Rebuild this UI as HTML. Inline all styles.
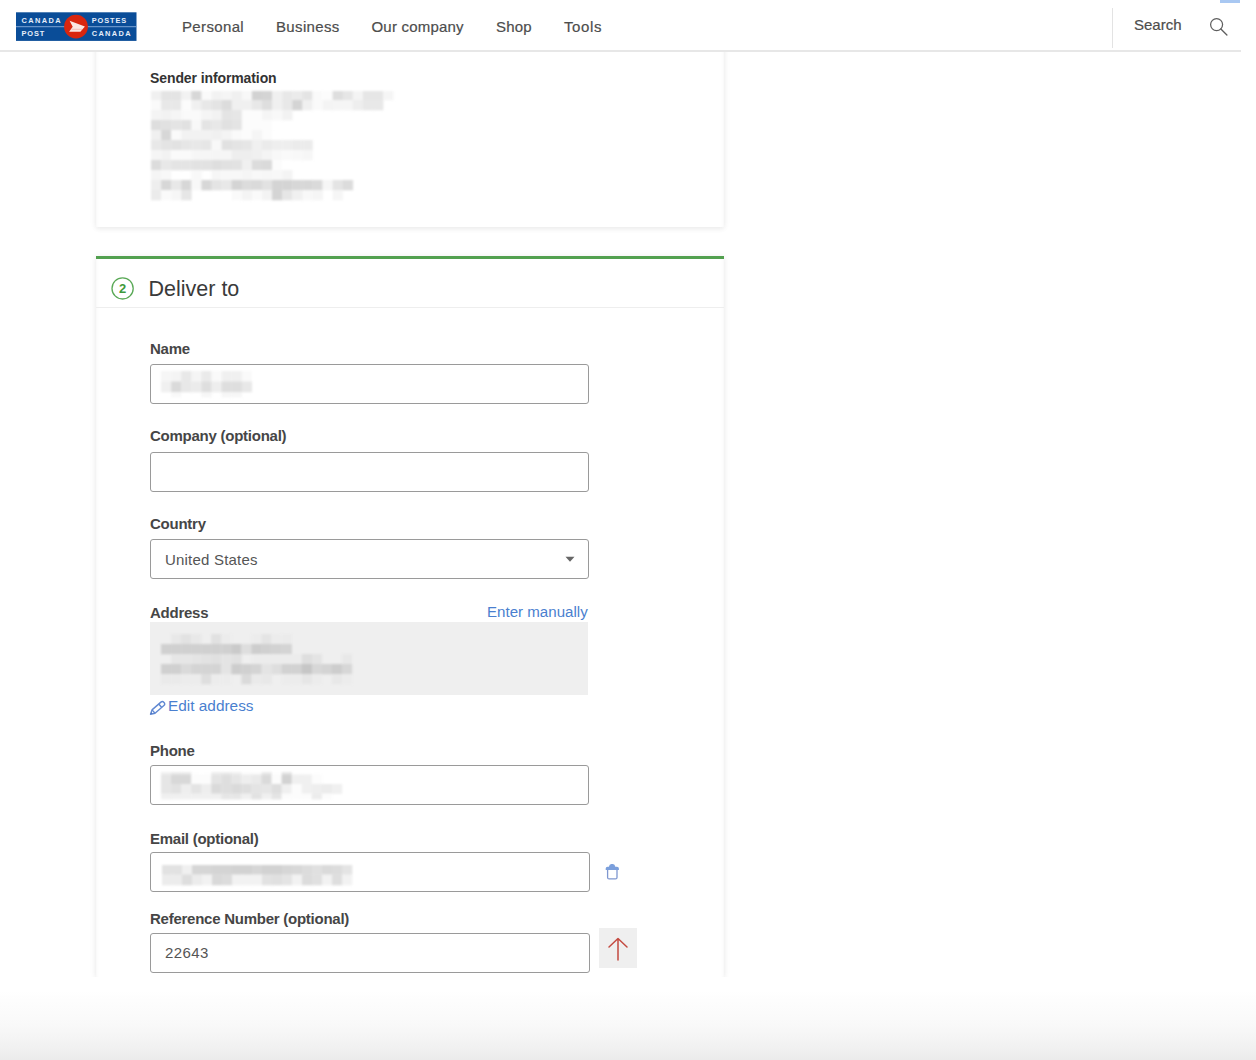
<!DOCTYPE html>
<html><head><meta charset="utf-8">
<style>
*{box-sizing:border-box;margin:0;padding:0}
html,body{width:1256px;height:1060px;overflow:hidden;background:#fff;font-family:"Liberation Sans",sans-serif}
.a{position:absolute}
.t{position:absolute;white-space:nowrap;line-height:1}
.nav{font-size:15px;color:#4d4d4d;letter-spacing:0.35px;-webkit-text-stroke:0.2px #4d4d4d}
.lbl{font-size:15px;font-weight:700;color:#464646;letter-spacing:-0.25px}
.inp{position:absolute;left:150px;width:439px;height:40px;border:1.3px solid #9a9a9a;border-radius:3px;background:#fff}
.blk{position:absolute;background:#d9d9d9}
.link{color:#4a7fcf;font-size:15.4px}
</style></head><body>

<!-- card 1 -->
<div class="a" style="left:96px;top:-20px;width:628px;height:247px;background:#fff;box-shadow:0 2px 5px rgba(0,0,0,0.06),0 0 8px rgba(0,0,0,0.05),inset 3px 0 3px -2px rgba(0,0,0,0.03),inset -3px 0 3px -2px rgba(0,0,0,0.03)"></div>
<!-- header -->
<div class="a" style="left:0;top:0;width:1241px;height:52px;border-bottom:2px solid #e7e7e7;background:#fff"></div>
<div class="a" style="left:1220px;top:0;width:20px;height:3px;background:#a9c8f2"></div>

<!-- logo -->
<svg class="a" style="left:16px;top:12px" width="121" height="30" viewBox="0 0 121 30">
  <rect x="0" y="0.3" width="120.5" height="28.6" fill="#0a4d98"/>
  <rect x="0" y="14.2" width="121" height="1" fill="#7ea5d5"/>
  <circle cx="60" cy="14.7" r="11.9" fill="#d9260f"/>
  <path d="M53.6 8.8 L68.9 14.4 L64.4 19.8 L53.1 19.8 L56.7 14.7 Z" fill="#fbe6e2"/>
  <path d="M55.5 17.3 L66 17.3" stroke="#f0b0a8" stroke-width="0.8"/>
  <g font-family="Liberation Sans" font-weight="700" font-size="7.4" fill="#e6eefa">
  <text x="5.6" y="10.7" textLength="38.9" lengthAdjust="spacing">CANADA</text>
  <text x="5.6" y="24.2" textLength="22.6" lengthAdjust="spacing">POST</text>
  <text x="75.7" y="10.7" textLength="34.6" lengthAdjust="spacing">POSTES</text>
  <text x="75.7" y="24.2" textLength="38.9" lengthAdjust="spacing">CANADA</text>
  </g>
</svg>

<div class="t nav" style="left:182px;top:19px">Personal</div>
<div class="t nav" style="left:276px;top:19px">Business</div>
<div class="t nav" style="left:371.5px;top:19px;letter-spacing:0.2px">Our company</div>
<div class="t nav" style="left:496px;top:19px;letter-spacing:0.2px">Shop</div>
<div class="t nav" style="left:564px;top:19px;letter-spacing:0.6px">Tools</div>

<div class="a" style="left:1111.5px;top:8px;width:1.5px;height:40px;background:#e3e3e3"></div>
<div class="t nav" style="left:1134px;top:17px;letter-spacing:0">Search</div>
<svg class="a" style="left:1205px;top:14px" width="28" height="26" viewBox="0 0 28 26">
  <circle cx="11.6" cy="10.6" r="6.0" fill="none" stroke="#5f5f5f" stroke-width="1.25"/>
  <line x1="15.9" y1="15" x2="21.9" y2="21" stroke="#5f5f5f" stroke-width="1.35" stroke-linecap="round"/>
</svg>

<div class="t lbl" style="left:150px;top:71px;letter-spacing:-0.1px;font-size:14px;color:#333">Sender information</div>

<!--B:sender--><svg class="a" style="left:151.2px;top:91px;overflow:visible;filter:blur(1.3px)" width="246" height="113"><g><rect x="0.00" y="0" width="10.39" height="9.3" fill="rgb(240,240,240)"/><rect x="10.09" y="0" width="10.39" height="9.3" fill="rgb(228,228,228)"/><rect x="20.18" y="0" width="10.39" height="9.3" fill="rgb(228,228,228)"/><rect x="30.27" y="0" width="10.39" height="9.3" fill="rgb(242,242,242)"/><rect x="40.36" y="0" width="10.39" height="9.3" fill="rgb(215,215,215)"/><rect x="50.45" y="0" width="10.39" height="9.3" fill="rgb(250,250,250)"/><rect x="60.54" y="0" width="10.39" height="9.3" fill="rgb(242,242,242)"/><rect x="70.63" y="0" width="10.39" height="9.3" fill="rgb(245,245,245)"/><rect x="80.72" y="0" width="10.39" height="9.3" fill="rgb(240,240,240)"/><rect x="90.81" y="0" width="10.39" height="9.3" fill="rgb(248,248,248)"/><rect x="100.90" y="0" width="10.39" height="9.3" fill="rgb(210,210,210)"/><rect x="110.99" y="0" width="10.39" height="9.3" fill="rgb(212,212,212)"/><rect x="121.08" y="0" width="10.39" height="9.3" fill="rgb(240,240,240)"/><rect x="131.17" y="0" width="10.39" height="9.3" fill="rgb(232,232,232)"/><rect x="141.26" y="0" width="10.39" height="9.3" fill="rgb(235,235,235)"/><rect x="151.35" y="0" width="10.39" height="9.3" fill="rgb(228,228,228)"/><rect x="161.44" y="0" width="10.39" height="9.3" fill="rgb(250,250,250)"/><rect x="171.53" y="0" width="10.39" height="9.3" fill="rgb(252,252,252)"/><rect x="181.62" y="0" width="10.39" height="9.3" fill="rgb(222,222,222)"/><rect x="191.71" y="0" width="10.39" height="9.3" fill="rgb(230,230,230)"/><rect x="201.80" y="0" width="10.39" height="9.3" fill="rgb(244,244,244)"/><rect x="211.89" y="0" width="10.39" height="9.3" fill="rgb(230,230,230)"/><rect x="221.98" y="0" width="10.39" height="9.3" fill="rgb(230,230,230)"/><rect x="232.07" y="0" width="10.39" height="9.3" fill="rgb(245,245,245)"/><rect x="0.00" y="9" width="10.39" height="10.3" fill="rgb(250,250,250)"/><rect x="10.09" y="9" width="10.39" height="10.3" fill="rgb(232,232,232)"/><rect x="20.18" y="9" width="10.39" height="10.3" fill="rgb(232,232,232)"/><rect x="30.27" y="9" width="10.39" height="10.3" fill="rgb(252,252,252)"/><rect x="40.36" y="9" width="10.39" height="10.3" fill="rgb(240,240,240)"/><rect x="50.45" y="9" width="10.39" height="10.3" fill="rgb(232,232,232)"/><rect x="60.54" y="9" width="10.39" height="10.3" fill="rgb(228,228,228)"/><rect x="70.63" y="9" width="10.39" height="10.3" fill="rgb(220,220,220)"/><rect x="80.72" y="9" width="10.39" height="10.3" fill="rgb(240,240,240)"/><rect x="90.81" y="9" width="10.39" height="10.3" fill="rgb(240,240,240)"/><rect x="100.90" y="9" width="10.39" height="10.3" fill="rgb(232,232,232)"/><rect x="110.99" y="9" width="10.39" height="10.3" fill="rgb(222,222,222)"/><rect x="121.08" y="9" width="10.39" height="10.3" fill="rgb(240,240,240)"/><rect x="131.17" y="9" width="10.39" height="10.3" fill="rgb(232,232,232)"/><rect x="141.26" y="9" width="10.39" height="10.3" fill="rgb(212,212,212)"/><rect x="151.35" y="9" width="10.39" height="10.3" fill="rgb(240,240,240)"/><rect x="161.44" y="9" width="10.39" height="10.3" fill="rgb(250,250,250)"/><rect x="171.53" y="9" width="10.39" height="10.3" fill="rgb(244,244,244)"/><rect x="181.62" y="9" width="10.39" height="10.3" fill="rgb(245,245,245)"/><rect x="191.71" y="9" width="10.39" height="10.3" fill="rgb(245,245,245)"/><rect x="201.80" y="9" width="10.39" height="10.3" fill="rgb(238,238,238)"/><rect x="211.89" y="9" width="10.39" height="10.3" fill="rgb(232,232,232)"/><rect x="221.98" y="9" width="10.39" height="10.3" fill="rgb(232,232,232)"/><rect x="0.00" y="19" width="10.39" height="10.3" fill="rgb(244,244,244)"/><rect x="10.09" y="19" width="10.39" height="10.3" fill="rgb(242,242,242)"/><rect x="20.18" y="19" width="10.39" height="10.3" fill="rgb(245,245,245)"/><rect x="30.27" y="19" width="10.39" height="10.3" fill="rgb(250,250,250)"/><rect x="40.36" y="19" width="10.39" height="10.3" fill="rgb(250,250,250)"/><rect x="50.45" y="19" width="10.39" height="10.3" fill="rgb(245,245,245)"/><rect x="60.54" y="19" width="10.39" height="10.3" fill="rgb(242,242,242)"/><rect x="70.63" y="19" width="10.39" height="10.3" fill="rgb(228,228,228)"/><rect x="80.72" y="19" width="10.39" height="10.3" fill="rgb(230,230,230)"/><rect x="90.81" y="19" width="10.39" height="10.3" fill="rgb(252,252,252)"/><rect x="100.90" y="19" width="10.39" height="10.3" fill="rgb(252,252,252)"/><rect x="110.99" y="19" width="10.39" height="10.3" fill="rgb(245,245,245)"/><rect x="121.08" y="19" width="10.39" height="10.3" fill="rgb(248,248,248)"/><rect x="131.17" y="19" width="10.39" height="10.3" fill="rgb(242,242,242)"/><rect x="0.00" y="29" width="10.39" height="10.3" fill="rgb(222,222,222)"/><rect x="10.09" y="29" width="10.39" height="10.3" fill="rgb(225,225,225)"/><rect x="20.18" y="29" width="10.39" height="10.3" fill="rgb(228,228,228)"/><rect x="30.27" y="29" width="10.39" height="10.3" fill="rgb(225,225,225)"/><rect x="40.36" y="29" width="10.39" height="10.3" fill="rgb(248,248,248)"/><rect x="50.45" y="29" width="10.39" height="10.3" fill="rgb(228,228,228)"/><rect x="60.54" y="29" width="10.39" height="10.3" fill="rgb(232,232,232)"/><rect x="70.63" y="29" width="10.39" height="10.3" fill="rgb(225,225,225)"/><rect x="80.72" y="29" width="10.39" height="10.3" fill="rgb(228,228,228)"/><rect x="90.81" y="29" width="10.39" height="10.3" fill="rgb(252,252,252)"/><rect x="100.90" y="29" width="10.39" height="10.3" fill="rgb(252,252,252)"/><rect x="110.99" y="29" width="10.39" height="10.3" fill="rgb(252,252,252)"/><rect x="0.00" y="39" width="10.39" height="10.3" fill="rgb(240,240,240)"/><rect x="10.09" y="39" width="10.39" height="10.3" fill="rgb(215,215,215)"/><rect x="20.18" y="39" width="10.39" height="10.3" fill="rgb(250,250,250)"/><rect x="30.27" y="39" width="10.39" height="10.3" fill="rgb(242,242,242)"/><rect x="40.36" y="39" width="10.39" height="10.3" fill="rgb(242,242,242)"/><rect x="50.45" y="39" width="10.39" height="10.3" fill="rgb(242,242,242)"/><rect x="60.54" y="39" width="10.39" height="10.3" fill="rgb(240,240,240)"/><rect x="70.63" y="39" width="10.39" height="10.3" fill="rgb(244,244,244)"/><rect x="80.72" y="39" width="10.39" height="10.3" fill="rgb(250,250,250)"/><rect x="90.81" y="39" width="10.39" height="10.3" fill="rgb(252,252,252)"/><rect x="100.90" y="39" width="10.39" height="10.3" fill="rgb(245,245,245)"/><rect x="110.99" y="39" width="10.39" height="10.3" fill="rgb(252,252,252)"/><rect x="0.00" y="49" width="10.39" height="10.3" fill="rgb(232,232,232)"/><rect x="10.09" y="49" width="10.39" height="10.3" fill="rgb(228,228,228)"/><rect x="20.18" y="49" width="10.39" height="10.3" fill="rgb(226,226,226)"/><rect x="30.27" y="49" width="10.39" height="10.3" fill="rgb(230,230,230)"/><rect x="40.36" y="49" width="10.39" height="10.3" fill="rgb(232,232,232)"/><rect x="50.45" y="49" width="10.39" height="10.3" fill="rgb(230,230,230)"/><rect x="60.54" y="49" width="10.39" height="10.3" fill="rgb(248,248,248)"/><rect x="70.63" y="49" width="10.39" height="10.3" fill="rgb(225,225,225)"/><rect x="80.72" y="49" width="10.39" height="10.3" fill="rgb(228,228,228)"/><rect x="90.81" y="49" width="10.39" height="10.3" fill="rgb(230,230,230)"/><rect x="100.90" y="49" width="10.39" height="10.3" fill="rgb(240,240,240)"/><rect x="110.99" y="49" width="10.39" height="10.3" fill="rgb(235,235,235)"/><rect x="121.08" y="49" width="10.39" height="10.3" fill="rgb(238,238,238)"/><rect x="131.17" y="49" width="10.39" height="10.3" fill="rgb(238,238,238)"/><rect x="141.26" y="49" width="10.39" height="10.3" fill="rgb(235,235,235)"/><rect x="151.35" y="49" width="10.39" height="10.3" fill="rgb(235,235,235)"/><rect x="0.00" y="59" width="10.39" height="10.3" fill="rgb(245,245,245)"/><rect x="10.09" y="59" width="10.39" height="10.3" fill="rgb(242,242,242)"/><rect x="20.18" y="59" width="10.39" height="10.3" fill="rgb(250,250,250)"/><rect x="30.27" y="59" width="10.39" height="10.3" fill="rgb(250,250,250)"/><rect x="40.36" y="59" width="10.39" height="10.3" fill="rgb(246,246,246)"/><rect x="50.45" y="59" width="10.39" height="10.3" fill="rgb(246,246,246)"/><rect x="60.54" y="59" width="10.39" height="10.3" fill="rgb(245,245,245)"/><rect x="70.63" y="59" width="10.39" height="10.3" fill="rgb(246,246,246)"/><rect x="80.72" y="59" width="10.39" height="10.3" fill="rgb(238,238,238)"/><rect x="90.81" y="59" width="10.39" height="10.3" fill="rgb(238,238,238)"/><rect x="100.90" y="59" width="10.39" height="10.3" fill="rgb(240,240,240)"/><rect x="110.99" y="59" width="10.39" height="10.3" fill="rgb(244,244,244)"/><rect x="121.08" y="59" width="10.39" height="10.3" fill="rgb(248,248,248)"/><rect x="131.17" y="59" width="10.39" height="10.3" fill="rgb(250,250,250)"/><rect x="141.26" y="59" width="10.39" height="10.3" fill="rgb(248,248,248)"/><rect x="151.35" y="59" width="10.39" height="10.3" fill="rgb(246,246,246)"/><rect x="0.00" y="69" width="10.39" height="10.3" fill="rgb(220,220,220)"/><rect x="10.09" y="69" width="10.39" height="10.3" fill="rgb(232,232,232)"/><rect x="20.18" y="69" width="10.39" height="10.3" fill="rgb(228,228,228)"/><rect x="30.27" y="69" width="10.39" height="10.3" fill="rgb(228,228,228)"/><rect x="40.36" y="69" width="10.39" height="10.3" fill="rgb(226,226,226)"/><rect x="50.45" y="69" width="10.39" height="10.3" fill="rgb(226,226,226)"/><rect x="60.54" y="69" width="10.39" height="10.3" fill="rgb(222,222,222)"/><rect x="70.63" y="69" width="10.39" height="10.3" fill="rgb(225,225,225)"/><rect x="80.72" y="69" width="10.39" height="10.3" fill="rgb(226,226,226)"/><rect x="90.81" y="69" width="10.39" height="10.3" fill="rgb(240,240,240)"/><rect x="100.90" y="69" width="10.39" height="10.3" fill="rgb(220,220,220)"/><rect x="110.99" y="69" width="10.39" height="10.3" fill="rgb(218,218,218)"/><rect x="121.08" y="69" width="10.39" height="10.3" fill="rgb(252,252,252)"/><rect x="0.00" y="79" width="10.39" height="10.3" fill="rgb(245,245,245)"/><rect x="10.09" y="79" width="10.39" height="10.3" fill="rgb(248,248,248)"/><rect x="40.36" y="79" width="10.39" height="10.3" fill="rgb(248,248,248)"/><rect x="60.54" y="79" width="10.39" height="10.3" fill="rgb(246,246,246)"/><rect x="70.63" y="79" width="10.39" height="10.3" fill="rgb(248,248,248)"/><rect x="80.72" y="79" width="10.39" height="10.3" fill="rgb(248,248,248)"/><rect x="90.81" y="79" width="10.39" height="10.3" fill="rgb(245,245,245)"/><rect x="100.90" y="79" width="10.39" height="10.3" fill="rgb(248,248,248)"/><rect x="110.99" y="79" width="10.39" height="10.3" fill="rgb(247,247,247)"/><rect x="121.08" y="79" width="10.39" height="10.3" fill="rgb(248,248,248)"/><rect x="131.17" y="79" width="10.39" height="10.3" fill="rgb(244,244,244)"/><rect x="0.00" y="89" width="10.39" height="10.3" fill="rgb(238,238,238)"/><rect x="10.09" y="89" width="10.39" height="10.3" fill="rgb(215,215,215)"/><rect x="20.18" y="89" width="10.39" height="10.3" fill="rgb(232,232,232)"/><rect x="30.27" y="89" width="10.39" height="10.3" fill="rgb(215,215,215)"/><rect x="40.36" y="89" width="10.39" height="10.3" fill="rgb(248,248,248)"/><rect x="50.45" y="89" width="10.39" height="10.3" fill="rgb(215,215,215)"/><rect x="60.54" y="89" width="10.39" height="10.3" fill="rgb(228,228,228)"/><rect x="70.63" y="89" width="10.39" height="10.3" fill="rgb(232,232,232)"/><rect x="80.72" y="89" width="10.39" height="10.3" fill="rgb(212,212,212)"/><rect x="90.81" y="89" width="10.39" height="10.3" fill="rgb(220,220,220)"/><rect x="100.90" y="89" width="10.39" height="10.3" fill="rgb(218,218,218)"/><rect x="110.99" y="89" width="10.39" height="10.3" fill="rgb(226,226,226)"/><rect x="121.08" y="89" width="10.39" height="10.3" fill="rgb(212,212,212)"/><rect x="131.17" y="89" width="10.39" height="10.3" fill="rgb(212,212,212)"/><rect x="141.26" y="89" width="10.39" height="10.3" fill="rgb(215,215,215)"/><rect x="151.35" y="89" width="10.39" height="10.3" fill="rgb(215,215,215)"/><rect x="161.44" y="89" width="10.39" height="10.3" fill="rgb(218,218,218)"/><rect x="171.53" y="89" width="10.39" height="10.3" fill="rgb(246,246,246)"/><rect x="181.62" y="89" width="10.39" height="10.3" fill="rgb(228,228,228)"/><rect x="191.71" y="89" width="10.39" height="10.3" fill="rgb(220,220,220)"/><rect x="0.00" y="99" width="10.39" height="10.3" fill="rgb(235,235,235)"/><rect x="10.09" y="99" width="10.39" height="10.3" fill="rgb(250,250,250)"/><rect x="20.18" y="99" width="10.39" height="10.3" fill="rgb(246,246,246)"/><rect x="30.27" y="99" width="10.39" height="10.3" fill="rgb(230,230,230)"/><rect x="80.72" y="99" width="10.39" height="10.3" fill="rgb(250,250,250)"/><rect x="90.81" y="99" width="10.39" height="10.3" fill="rgb(244,244,244)"/><rect x="100.90" y="99" width="10.39" height="10.3" fill="rgb(250,250,250)"/><rect x="110.99" y="99" width="10.39" height="10.3" fill="rgb(243,243,243)"/><rect x="121.08" y="99" width="10.39" height="10.3" fill="rgb(212,212,212)"/><rect x="131.17" y="99" width="10.39" height="10.3" fill="rgb(230,230,230)"/><rect x="141.26" y="99" width="10.39" height="10.3" fill="rgb(240,240,240)"/><rect x="151.35" y="99" width="10.39" height="10.3" fill="rgb(248,248,248)"/><rect x="161.44" y="99" width="10.39" height="10.3" fill="rgb(245,245,245)"/><rect x="181.62" y="99" width="10.39" height="10.3" fill="rgb(246,246,246)"/></g></svg><!--/B:sender-->

<!-- card 2 -->
<div class="a" style="left:96px;top:256px;width:628px;height:721px;background:#fff;box-shadow:0 2px 5px rgba(0,0,0,0.06),0 0 8px rgba(0,0,0,0.05),inset 3px 0 3px -2px rgba(0,0,0,0.03),inset -3px 0 3px -2px rgba(0,0,0,0.03)"></div>
<div class="a" style="left:96px;top:256px;width:628px;height:3px;background:#52a04f"></div>
<div class="a" style="left:96px;top:307px;width:628px;height:1px;background:#eeeeee"></div>
<svg class="a" style="left:110px;top:276px" width="26" height="26" viewBox="0 0 26 26">
  <circle cx="12.6" cy="12.4" r="10.6" fill="none" stroke="#5aa957" stroke-width="1.3"/>
  <text x="12.6" y="16.6" text-anchor="middle" font-family="Liberation Sans" font-weight="700" font-size="13" fill="#3e9a3b">2</text>
</svg>
<div class="t" style="left:148.5px;top:278.5px;font-size:21.5px;color:#3a3a3a">Deliver to</div>

<div class="t lbl" style="left:150px;top:340.5px">Name</div>
<div class="inp" style="top:364px"></div>
<!--B:name--><svg class="a" style="left:161.1px;top:371.1px;overflow:visible;filter:blur(1.3px)" width="94" height="30"><g><rect x="0.00" y="0" width="10.39" height="10.8" fill="rgb(246,246,246)"/><rect x="10.09" y="0" width="10.39" height="10.8" fill="rgb(244,244,244)"/><rect x="20.18" y="0" width="10.39" height="10.8" fill="rgb(232,232,232)"/><rect x="30.27" y="0" width="10.39" height="10.8" fill="rgb(245,245,245)"/><rect x="40.36" y="0" width="10.39" height="10.8" fill="rgb(234,234,234)"/><rect x="50.45" y="0" width="10.39" height="10.8" fill="rgb(250,250,250)"/><rect x="60.54" y="0" width="10.39" height="10.8" fill="rgb(240,240,240)"/><rect x="70.63" y="0" width="10.39" height="10.8" fill="rgb(240,240,240)"/><rect x="80.72" y="0" width="10.39" height="10.8" fill="rgb(250,250,250)"/><rect x="0.00" y="10.5" width="10.39" height="10.8" fill="rgb(240,240,240)"/><rect x="10.09" y="10.5" width="10.39" height="10.8" fill="rgb(218,218,218)"/><rect x="20.18" y="10.5" width="10.39" height="10.8" fill="rgb(232,232,232)"/><rect x="30.27" y="10.5" width="10.39" height="10.8" fill="rgb(235,235,235)"/><rect x="40.36" y="10.5" width="10.39" height="10.8" fill="rgb(222,222,222)"/><rect x="50.45" y="10.5" width="10.39" height="10.8" fill="rgb(238,238,238)"/><rect x="60.54" y="10.5" width="10.39" height="10.8" fill="rgb(222,222,222)"/><rect x="70.63" y="10.5" width="10.39" height="10.8" fill="rgb(222,222,222)"/><rect x="80.72" y="10.5" width="10.39" height="10.8" fill="rgb(232,232,232)"/><rect x="10.09" y="21" width="10.39" height="5.3" fill="rgb(248,248,248)"/><rect x="40.36" y="21" width="10.39" height="5.3" fill="rgb(246,246,246)"/><rect x="60.54" y="21" width="10.39" height="5.3" fill="rgb(246,246,246)"/><rect x="70.63" y="21" width="10.39" height="5.3" fill="rgb(246,246,246)"/></g></svg><!--/B:name-->

<div class="t lbl" style="left:150px;top:427.5px">Company (optional)</div>
<div class="inp" style="top:451.5px"></div>

<div class="t lbl" style="left:150px;top:515.5px">Country</div>
<div class="inp" style="top:539px"></div>
<div class="t" style="left:165px;top:552px;font-size:15px;color:#555;letter-spacing:0.2px">United States</div>
<svg class="a" style="left:565px;top:556px" width="10" height="7" viewBox="0 0 10 7"><path d="M0.5 0.8 L9.5 0.8 L5 5.8 Z" fill="#666"/></svg>

<div class="t lbl" style="left:150px;top:604.6px">Address</div>
<div class="t link" style="left:487px;top:603.5px;letter-spacing:0px;font-size:15.1px">Enter manually</div>
<div class="a" style="left:150px;top:622px;width:438px;height:73px;background:#efefef"></div>
<!--B:addr--><svg class="a" style="left:161.4px;top:634.2px;overflow:visible;filter:blur(1.0px)" width="194" height="54"><g><rect x="10.05" y="0" width="10.35" height="10.3" fill="rgb(232,232,232)"/><rect x="20.10" y="0" width="10.35" height="10.3" fill="rgb(226,226,226)"/><rect x="30.15" y="0" width="10.35" height="10.3" fill="rgb(232,232,232)"/><rect x="50.25" y="0" width="10.35" height="10.3" fill="rgb(225,225,225)"/><rect x="60.30" y="0" width="10.35" height="10.3" fill="rgb(236,236,236)"/><rect x="90.45" y="0" width="10.35" height="10.3" fill="rgb(236,236,236)"/><rect x="100.50" y="0" width="10.35" height="10.3" fill="rgb(228,228,228)"/><rect x="110.55" y="0" width="10.35" height="10.3" fill="rgb(236,236,236)"/><rect x="120.60" y="0" width="10.35" height="10.3" fill="rgb(235,235,235)"/><rect x="0.00" y="10" width="10.35" height="10.3" fill="rgb(208,208,208)"/><rect x="10.05" y="10" width="10.35" height="10.3" fill="rgb(208,208,208)"/><rect x="20.10" y="10" width="10.35" height="10.3" fill="rgb(208,208,208)"/><rect x="30.15" y="10" width="10.35" height="10.3" fill="rgb(208,208,208)"/><rect x="40.20" y="10" width="10.35" height="10.3" fill="rgb(208,208,208)"/><rect x="50.25" y="10" width="10.35" height="10.3" fill="rgb(208,208,208)"/><rect x="60.30" y="10" width="10.35" height="10.3" fill="rgb(208,208,208)"/><rect x="70.35" y="10" width="10.35" height="10.3" fill="rgb(202,202,202)"/><rect x="80.40" y="10" width="10.35" height="10.3" fill="rgb(222,222,222)"/><rect x="90.45" y="10" width="10.35" height="10.3" fill="rgb(205,205,205)"/><rect x="100.50" y="10" width="10.35" height="10.3" fill="rgb(208,208,208)"/><rect x="110.55" y="10" width="10.35" height="10.3" fill="rgb(210,210,210)"/><rect x="120.60" y="10" width="10.35" height="10.3" fill="rgb(212,212,212)"/><rect x="10.05" y="20" width="10.35" height="10.3" fill="rgb(230,230,230)"/><rect x="20.10" y="20" width="10.35" height="10.3" fill="rgb(230,230,230)"/><rect x="30.15" y="20" width="10.35" height="10.3" fill="rgb(228,228,228)"/><rect x="40.20" y="20" width="10.35" height="10.3" fill="rgb(226,226,226)"/><rect x="50.25" y="20" width="10.35" height="10.3" fill="rgb(224,224,224)"/><rect x="60.30" y="20" width="10.35" height="10.3" fill="rgb(228,228,228)"/><rect x="70.35" y="20" width="10.35" height="10.3" fill="rgb(225,225,225)"/><rect x="90.45" y="20" width="10.35" height="10.3" fill="rgb(236,236,236)"/><rect x="100.50" y="20" width="10.35" height="10.3" fill="rgb(236,236,236)"/><rect x="110.55" y="20" width="10.35" height="10.3" fill="rgb(236,236,236)"/><rect x="120.60" y="20" width="10.35" height="10.3" fill="rgb(236,236,236)"/><rect x="130.65" y="20" width="10.35" height="10.3" fill="rgb(236,236,236)"/><rect x="140.70" y="20" width="10.35" height="10.3" fill="rgb(222,222,222)"/><rect x="150.75" y="20" width="10.35" height="10.3" fill="rgb(228,228,228)"/><rect x="180.90" y="20" width="10.35" height="10.3" fill="rgb(232,232,232)"/><rect x="0.00" y="30" width="10.35" height="10.3" fill="rgb(208,208,208)"/><rect x="10.05" y="30" width="10.35" height="10.3" fill="rgb(208,208,208)"/><rect x="20.10" y="30" width="10.35" height="10.3" fill="rgb(218,218,218)"/><rect x="30.15" y="30" width="10.35" height="10.3" fill="rgb(212,212,212)"/><rect x="40.20" y="30" width="10.35" height="10.3" fill="rgb(212,212,212)"/><rect x="50.25" y="30" width="10.35" height="10.3" fill="rgb(212,212,212)"/><rect x="60.30" y="30" width="10.35" height="10.3" fill="rgb(228,228,228)"/><rect x="70.35" y="30" width="10.35" height="10.3" fill="rgb(205,205,205)"/><rect x="80.40" y="30" width="10.35" height="10.3" fill="rgb(208,208,208)"/><rect x="90.45" y="30" width="10.35" height="10.3" fill="rgb(212,212,212)"/><rect x="100.50" y="30" width="10.35" height="10.3" fill="rgb(228,228,228)"/><rect x="110.55" y="30" width="10.35" height="10.3" fill="rgb(222,222,222)"/><rect x="120.60" y="30" width="10.35" height="10.3" fill="rgb(210,210,210)"/><rect x="130.65" y="30" width="10.35" height="10.3" fill="rgb(210,210,210)"/><rect x="140.70" y="30" width="10.35" height="10.3" fill="rgb(198,198,198)"/><rect x="150.75" y="30" width="10.35" height="10.3" fill="rgb(215,215,215)"/><rect x="160.80" y="30" width="10.35" height="10.3" fill="rgb(212,212,212)"/><rect x="170.85" y="30" width="10.35" height="10.3" fill="rgb(205,205,205)"/><rect x="180.90" y="30" width="10.35" height="10.3" fill="rgb(215,215,215)"/><rect x="0.00" y="40" width="10.35" height="10.3" fill="rgb(234,234,234)"/><rect x="10.05" y="40" width="10.35" height="10.3" fill="rgb(234,234,234)"/><rect x="20.10" y="40" width="10.35" height="10.3" fill="rgb(236,236,236)"/><rect x="30.15" y="40" width="10.35" height="10.3" fill="rgb(236,236,236)"/><rect x="40.20" y="40" width="10.35" height="10.3" fill="rgb(222,222,222)"/><rect x="50.25" y="40" width="10.35" height="10.3" fill="rgb(236,236,236)"/><rect x="60.30" y="40" width="10.35" height="10.3" fill="rgb(236,236,236)"/><rect x="80.40" y="40" width="10.35" height="10.3" fill="rgb(218,218,218)"/><rect x="90.45" y="40" width="10.35" height="10.3" fill="rgb(234,234,234)"/><rect x="100.50" y="40" width="10.35" height="10.3" fill="rgb(232,232,232)"/><rect x="120.60" y="40" width="10.35" height="10.3" fill="rgb(236,236,236)"/><rect x="130.65" y="40" width="10.35" height="10.3" fill="rgb(236,236,236)"/><rect x="140.70" y="40" width="10.35" height="10.3" fill="rgb(230,230,230)"/><rect x="150.75" y="40" width="10.35" height="10.3" fill="rgb(236,236,236)"/><rect x="170.85" y="40" width="10.35" height="10.3" fill="rgb(232,232,232)"/><rect x="180.90" y="40" width="10.35" height="10.3" fill="rgb(236,236,236)"/></g></svg><!--/B:addr-->

<svg class="a" style="left:146px;top:696px" width="30" height="22" viewBox="0 0 30 22">
  <g transform="translate(4.5 18.2) rotate(-41) scale(0.95)">
    <path d="M0 0 L4.2 -2.4 L16.6 -2.4 Q18.8 -2.4 18.8 0 Q18.8 2.4 16.6 2.4 L4.2 2.4 Z" fill="none" stroke="#6088d2" stroke-width="1.45" stroke-linejoin="round"/>
    <path d="M4.2 -2.4 L4.2 2.4 M13.6 -2.4 L13.6 2.4" stroke="#6088d2" stroke-width="1.5"/>
    <path d="M0 0 L2.2 -1.2 L2.2 1.2 Z" fill="#4f78c4"/>
  </g>
</svg>
<div class="t link" style="left:168px;top:698px">Edit address</div>

<div class="t lbl" style="left:150px;top:743px">Phone</div>
<div class="inp" style="top:765px"></div>
<!--B:phone--><svg class="a" style="left:161.4px;top:772.3px;overflow:visible;filter:blur(1.0px)" width="184" height="31"><g><rect x="0.00" y="0" width="10.35" height="2.8" fill="rgb(240,240,240)"/><rect x="10.05" y="0" width="10.35" height="2.8" fill="rgb(236,236,236)"/><rect x="20.10" y="0" width="10.35" height="2.8" fill="rgb(236,236,236)"/><rect x="50.25" y="0" width="10.35" height="2.8" fill="rgb(238,238,238)"/><rect x="60.30" y="0" width="10.35" height="2.8" fill="rgb(236,236,236)"/><rect x="70.35" y="0" width="10.35" height="2.8" fill="rgb(240,240,240)"/><rect x="80.40" y="0" width="10.35" height="2.8" fill="rgb(252,252,252)"/><rect x="90.45" y="0" width="10.35" height="2.8" fill="rgb(252,252,252)"/><rect x="100.50" y="0" width="10.35" height="2.8" fill="rgb(234,234,234)"/><rect x="120.60" y="0" width="10.35" height="2.8" fill="rgb(230,230,230)"/><rect x="0.00" y="2.5" width="10.35" height="9.8" fill="rgb(230,230,230)"/><rect x="10.05" y="2.5" width="10.35" height="9.8" fill="rgb(216,216,216)"/><rect x="20.10" y="2.5" width="10.35" height="9.8" fill="rgb(216,216,216)"/><rect x="30.15" y="2.5" width="10.35" height="9.8" fill="rgb(252,252,252)"/><rect x="40.20" y="2.5" width="10.35" height="9.8" fill="rgb(252,252,252)"/><rect x="50.25" y="2.5" width="10.35" height="9.8" fill="rgb(228,228,228)"/><rect x="60.30" y="2.5" width="10.35" height="9.8" fill="rgb(222,222,222)"/><rect x="70.35" y="2.5" width="10.35" height="9.8" fill="rgb(230,230,230)"/><rect x="80.40" y="2.5" width="10.35" height="9.8" fill="rgb(238,238,238)"/><rect x="90.45" y="2.5" width="10.35" height="9.8" fill="rgb(234,234,234)"/><rect x="100.50" y="2.5" width="10.35" height="9.8" fill="rgb(218,218,218)"/><rect x="110.55" y="2.5" width="10.35" height="9.8" fill="rgb(252,252,252)"/><rect x="120.60" y="2.5" width="10.35" height="9.8" fill="rgb(210,210,210)"/><rect x="130.65" y="2.5" width="10.35" height="9.8" fill="rgb(240,240,240)"/><rect x="140.70" y="2.5" width="10.35" height="9.8" fill="rgb(240,240,240)"/><rect x="150.75" y="2.5" width="10.35" height="9.8" fill="rgb(252,252,252)"/><rect x="0.00" y="12" width="10.35" height="9.9" fill="rgb(230,230,230)"/><rect x="10.05" y="12" width="10.35" height="9.9" fill="rgb(226,226,226)"/><rect x="20.10" y="12" width="10.35" height="9.9" fill="rgb(238,238,238)"/><rect x="30.15" y="12" width="10.35" height="9.9" fill="rgb(228,228,228)"/><rect x="40.20" y="12" width="10.35" height="9.9" fill="rgb(238,238,238)"/><rect x="50.25" y="12" width="10.35" height="9.9" fill="rgb(218,218,218)"/><rect x="60.30" y="12" width="10.35" height="9.9" fill="rgb(222,222,222)"/><rect x="70.35" y="12" width="10.35" height="9.9" fill="rgb(218,218,218)"/><rect x="80.40" y="12" width="10.35" height="9.9" fill="rgb(222,222,222)"/><rect x="90.45" y="12" width="10.35" height="9.9" fill="rgb(228,228,228)"/><rect x="100.50" y="12" width="10.35" height="9.9" fill="rgb(230,230,230)"/><rect x="110.55" y="12" width="10.35" height="9.9" fill="rgb(222,222,222)"/><rect x="120.60" y="12" width="10.35" height="9.9" fill="rgb(240,240,240)"/><rect x="130.65" y="12" width="10.35" height="9.9" fill="rgb(252,252,252)"/><rect x="140.70" y="12" width="10.35" height="9.9" fill="rgb(240,240,240)"/><rect x="150.75" y="12" width="10.35" height="9.9" fill="rgb(238,238,238)"/><rect x="160.80" y="12" width="10.35" height="9.9" fill="rgb(236,236,236)"/><rect x="170.85" y="12" width="10.35" height="9.9" fill="rgb(240,240,240)"/><rect x="0.00" y="21.6" width="10.35" height="5.8" fill="rgb(240,240,240)"/><rect x="10.05" y="21.6" width="10.35" height="5.8" fill="rgb(240,240,240)"/><rect x="20.10" y="21.6" width="10.35" height="5.8" fill="rgb(240,240,240)"/><rect x="30.15" y="21.6" width="10.35" height="5.8" fill="rgb(240,240,240)"/><rect x="40.20" y="21.6" width="10.35" height="5.8" fill="rgb(240,240,240)"/><rect x="50.25" y="21.6" width="10.35" height="5.8" fill="rgb(240,240,240)"/><rect x="60.30" y="21.6" width="10.35" height="5.8" fill="rgb(230,230,230)"/><rect x="70.35" y="21.6" width="10.35" height="5.8" fill="rgb(230,230,230)"/><rect x="80.40" y="21.6" width="10.35" height="5.8" fill="rgb(240,240,240)"/><rect x="90.45" y="21.6" width="10.35" height="5.8" fill="rgb(226,226,226)"/><rect x="100.50" y="21.6" width="10.35" height="5.8" fill="rgb(240,240,240)"/><rect x="110.55" y="21.6" width="10.35" height="5.8" fill="rgb(228,228,228)"/><rect x="120.60" y="21.6" width="10.35" height="5.8" fill="rgb(252,252,252)"/><rect x="130.65" y="21.6" width="10.35" height="5.8" fill="rgb(252,252,252)"/><rect x="140.70" y="21.6" width="10.35" height="5.8" fill="rgb(252,252,252)"/><rect x="150.75" y="21.6" width="10.35" height="5.8" fill="rgb(236,236,236)"/><rect x="160.80" y="21.6" width="10.35" height="5.8" fill="rgb(252,252,252)"/></g></svg><!--/B:phone-->

<div class="t lbl" style="left:150px;top:831px">Email (optional)</div>
<div class="inp" style="top:852px;width:440px"></div>
<!--B:email--><svg class="a" style="left:162px;top:864.8px;overflow:visible;filter:blur(1.0px)" width="194" height="24"><g><rect x="0.00" y="0" width="10.30" height="9.8" fill="rgb(226,226,226)"/><rect x="10.00" y="0" width="10.30" height="9.8" fill="rgb(226,226,226)"/><rect x="20.00" y="0" width="10.30" height="9.8" fill="rgb(240,240,240)"/><rect x="30.00" y="0" width="10.30" height="9.8" fill="rgb(214,214,214)"/><rect x="40.00" y="0" width="10.30" height="9.8" fill="rgb(214,214,214)"/><rect x="50.00" y="0" width="10.30" height="9.8" fill="rgb(212,212,212)"/><rect x="60.00" y="0" width="10.30" height="9.8" fill="rgb(212,212,212)"/><rect x="70.00" y="0" width="10.30" height="9.8" fill="rgb(210,210,210)"/><rect x="80.00" y="0" width="10.30" height="9.8" fill="rgb(210,210,210)"/><rect x="90.00" y="0" width="10.30" height="9.8" fill="rgb(214,214,214)"/><rect x="100.00" y="0" width="10.30" height="9.8" fill="rgb(210,210,210)"/><rect x="110.00" y="0" width="10.30" height="9.8" fill="rgb(210,210,210)"/><rect x="120.00" y="0" width="10.30" height="9.8" fill="rgb(214,214,214)"/><rect x="130.00" y="0" width="10.30" height="9.8" fill="rgb(216,216,216)"/><rect x="140.00" y="0" width="10.30" height="9.8" fill="rgb(220,220,220)"/><rect x="150.00" y="0" width="10.30" height="9.8" fill="rgb(224,224,224)"/><rect x="160.00" y="0" width="10.30" height="9.8" fill="rgb(218,218,218)"/><rect x="170.00" y="0" width="10.30" height="9.8" fill="rgb(220,220,220)"/><rect x="180.00" y="0" width="10.30" height="9.8" fill="rgb(228,228,228)"/><rect x="0.00" y="9.5" width="10.30" height="10.8" fill="rgb(236,236,236)"/><rect x="10.00" y="9.5" width="10.30" height="10.8" fill="rgb(236,236,236)"/><rect x="20.00" y="9.5" width="10.30" height="10.8" fill="rgb(222,222,222)"/><rect x="30.00" y="9.5" width="10.30" height="10.8" fill="rgb(236,236,236)"/><rect x="40.00" y="9.5" width="10.30" height="10.8" fill="rgb(242,242,242)"/><rect x="50.00" y="9.5" width="10.30" height="10.8" fill="rgb(217,217,217)"/><rect x="60.00" y="9.5" width="10.30" height="10.8" fill="rgb(220,220,220)"/><rect x="70.00" y="9.5" width="10.30" height="10.8" fill="rgb(242,242,242)"/><rect x="80.00" y="9.5" width="10.30" height="10.8" fill="rgb(242,242,242)"/><rect x="90.00" y="9.5" width="10.30" height="10.8" fill="rgb(242,242,242)"/><rect x="100.00" y="9.5" width="10.30" height="10.8" fill="rgb(226,226,226)"/><rect x="110.00" y="9.5" width="10.30" height="10.8" fill="rgb(224,224,224)"/><rect x="120.00" y="9.5" width="10.30" height="10.8" fill="rgb(228,228,228)"/><rect x="130.00" y="9.5" width="10.30" height="10.8" fill="rgb(242,242,242)"/><rect x="140.00" y="9.5" width="10.30" height="10.8" fill="rgb(220,220,220)"/><rect x="150.00" y="9.5" width="10.30" height="10.8" fill="rgb(224,224,224)"/><rect x="160.00" y="9.5" width="10.30" height="10.8" fill="rgb(242,242,242)"/><rect x="170.00" y="9.5" width="10.30" height="10.8" fill="rgb(222,222,222)"/><rect x="180.00" y="9.5" width="10.30" height="10.8" fill="rgb(242,242,242)"/></g></svg><!--/B:email-->
<svg class="a" style="left:603px;top:862px" width="18" height="20" viewBox="0 0 18 20">
  <path d="M2.7 8 L2.7 6.6 Q2.7 4.7 4.6 4.7 L5.9 4.7 Q6.3 2.1 8.4 2.1 L9.9 2.1 Q11.9 2.1 12.3 4.7 L14 4.7 Q15.9 4.7 15.9 6.6 L15.9 8 Z" fill="#7b9fdc"/>
  <path d="M4.6 8 L4.6 15.4 Q4.6 16.9 6.1 16.9 L12.5 16.9 Q14 16.9 14 15.4 L14 8" fill="none" stroke="#7f97d0" stroke-width="1.3"/>
</svg>

<div class="t lbl" style="left:150px;top:911px">Reference Number (optional)</div>
<div class="inp" style="top:933px;width:440px"></div>
<div class="t" style="left:165px;top:944.5px;font-size:15px;color:#555;letter-spacing:0.4px">22643</div>
<div class="a" style="left:598.8px;top:928.2px;width:38.6px;height:39.4px;background:#efefef"></div>
<svg class="a" style="left:598px;top:928px" width="40" height="40" viewBox="0 0 40 40">
  <path d="M20 32 L20 11 M11 19 L20 10.5 L29 19" fill="none" stroke="#c44a40" stroke-width="1.5" stroke-linecap="round" stroke-linejoin="round"/>
</svg>

<!-- bottom gradient -->
<div class="a" style="left:0;top:977px;width:1256px;height:83px;background:linear-gradient(to bottom,#fff 0%,#fff 17%,#fdfdfd 28%,#f9f9f9 57%,#f5f5f5 72%,#f0f0f0 87%,#ebebeb 100%)"></div>

</body></html>
